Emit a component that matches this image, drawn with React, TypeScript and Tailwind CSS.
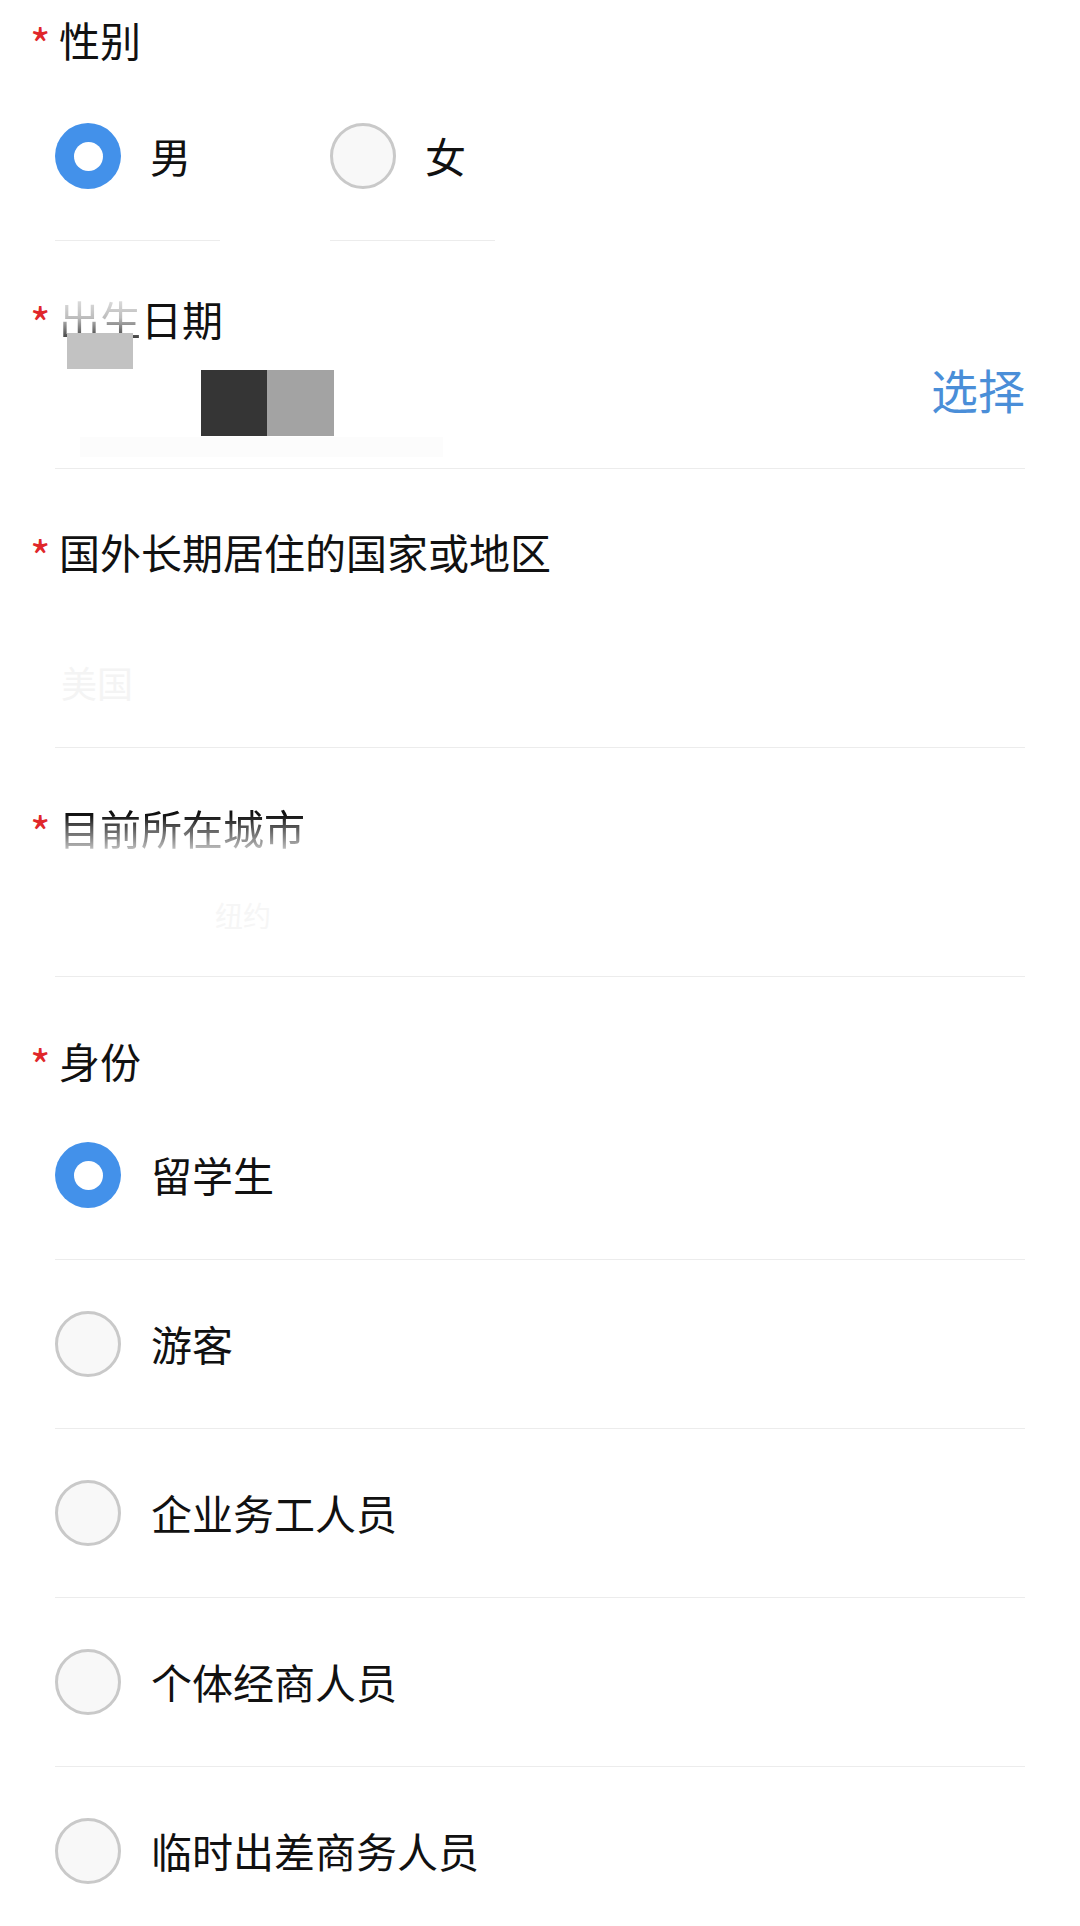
const font = {
  fontFamily: '"Noto Sans CJK SC", "Noto Sans", sans-serif',
};

function Label({ children }: { children: React.ReactNode }) {
  return (
    <div className="flex h-[48px] items-center pl-[30px]">
      <span className="mt-[8px] w-[29px] text-[44px] leading-none text-[#e0262a]">
        *
      </span>
      <span className="text-[41px] leading-[48px] text-[#111111]">{children}</span>
    </div>
  );
}

function Radio({ checked }: { checked: boolean }) {
  if (checked) {
    return (
      <div className="flex h-[66px] w-[66px] shrink-0 items-center justify-center rounded-full bg-[#4391ea]">
        <div className="h-[29px] w-[29px] rounded-full bg-white" />
      </div>
    );
  }
  return (
    <div className="h-[66px] w-[66px] shrink-0 rounded-full border-[3px] border-[#c9c9c9] bg-[#f8f8f8]" />
  );
}

const identities = [
  { label: "留学生", checked: true },
  { label: "游客", checked: false },
  { label: "企业务工人员", checked: false },
  { label: "个体经商人员", checked: false },
  { label: "临时出差商务人员", checked: false },
];

export default function App() {
  return (
    <div className="h-[1926px] overflow-hidden bg-white" style={font}>
      {/* 性别 */}
      <div className="pt-[15px]">
        <Label>性别</Label>
        <div className="mt-[60px] flex gap-[110px] pl-[55px]">
          {[
            { label: "男", checked: true },
            { label: "女", checked: false },
          ].map((o) => (
            <div
              key={o.label}
              className="w-[165px] border-b border-[#ececec] pb-[51px]"
            >
              <div className="flex h-[66px] items-center gap-[29px]">
                <Radio checked={o.checked} />
                <span className="text-[41px] text-[#111111]">{o.label}</span>
              </div>
            </div>
          ))}
        </div>
      </div>

      {/* 出生日期 */}
      <div className="relative pt-[53px]">
        <Label>
          <span className="bg-gradient-to-b from-[#f2f2f2] via-[#bdbdbd] to-[#111111] bg-clip-text text-transparent">
            出生
          </span>
          日期
        </Label>
        <div className="px-[55px]">
          <div className="flex h-[92px] items-center justify-end">
            <span className="text-[47px] leading-none text-[#4a8ed8]">
              选择
            </span>
          </div>
          <div className="h-[35px] border-b border-[#ececec]" />
        </div>
        <div className="absolute left-[67px] top-[92px] h-[36px] w-[66px] bg-[#c2c2c2]" />
        <div className="absolute left-[201px] top-[129px] flex h-[66px]">
          <div className="w-[66px] bg-[#353535]" />
          <div className="w-[67px] bg-[#a3a3a3]" />
        </div>
        <div className="absolute left-[80px] top-[196px] h-[20px] w-[363px] bg-[#fcfcfc]" />
      </div>

      {/* 国外长期居住的国家或地区 */}
      <div className="pt-[58px]">
        <Label>国外长期居住的国家或地区</Label>
        <div className="px-[55px]">
          <div className="mt-[77px] flex h-[60px] items-center pl-[6px] text-[36px] text-[#f4f4f4]">
            美国
          </div>
          <div className="h-[36px] border-b border-[#ececec]" />
        </div>
      </div>

      {/* 目前所在城市 */}
      <div className="pt-[55px]">
        <Label>
          <span className="bg-gradient-to-b from-[#111111] from-30% via-[#555555] to-[#e6e6e6] bg-clip-text text-transparent">
            目前所在城市
          </span>
        </Label>
        <div className="px-[55px]">
          <div className="mt-[34px] flex h-[60px] items-center pl-[160px] text-[28px] text-[#f6f6f6]">
            纽约
          </div>
          <div className="h-[32px] border-b border-[#ececec]" />
        </div>
      </div>

      {/* 身份 */}
      <div className="pt-[59px]">
        <Label>身份</Label>
        <div className="mt-[7px] px-[55px]">
          {identities.map((item) => (
            <div
              key={item.label}
              className="flex h-[169px] items-center gap-[30px] border-b border-[#ececec]"
            >
              <Radio checked={item.checked} />
              <span className="text-[41px] text-[#111111]">{item.label}</span>
            </div>
          ))}
        </div>
      </div>
    </div>
  );
}
